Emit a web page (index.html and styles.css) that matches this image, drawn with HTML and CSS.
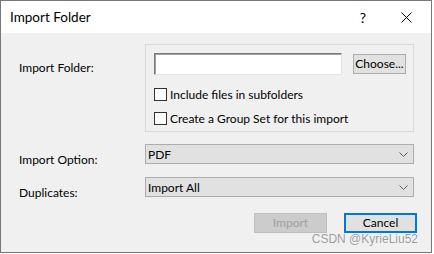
FILE: index.html
```html
<!DOCTYPE html>
<html lang="en">
<head>
  <meta charset="UTF-8" />
  <title>Import Folder</title>
  <link rel="stylesheet" href="styles.css">
</head>
<body>
  <div class="dialog">
    <div class="titlebar">
      <span class="title">Import Folder</span>
      <span class="help">?</span>
      <svg class="close" width="11" height="11" viewBox="0 0 11 11">
        <path d="M0.5 0.5 L10.5 10.5 M10.5 0.5 L0.5 10.5" stroke="#000" stroke-width="1" fill="none"/>
      </svg>
    </div>

    <div class="content">
      <div class="row">
        <label class="field-label folder-label">Import Folder:</label>
        <div class="group">
          <div class="path-line">
            <input class="path" type="text">
            <button class="btn choose">Choose...</button>
          </div>
          <label class="check"><input type="checkbox"><span>Include files in subfolders</span></label>
          <label class="check"><input type="checkbox"><span>Create a Group Set for this import</span></label>
        </div>
      </div>

      <div class="row combo-row">
        <label class="field-label">Import Option:</label>
        <div class="combo">
          <span>PDF</span>
          <svg class="chevron" width="9" height="5" viewBox="0 0 9 5"><path d="M0.5 0.5 L4.5 4.5 L8.5 0.5" stroke="#606060" fill="none"/></svg>
        </div>
      </div>

      <div class="row combo-row">
        <label class="field-label">Duplicates:</label>
        <div class="combo">
          <span>Import All</span>
          <svg class="chevron" width="9" height="5" viewBox="0 0 9 5"><path d="M0.5 0.5 L4.5 4.5 L8.5 0.5" stroke="#606060" fill="none"/></svg>
        </div>
      </div>

      <div class="actions">
        <button class="btn action" disabled>Import</button>
        <button class="btn action default">Cancel</button>
      </div>
    </div>

    <div class="watermark">CSDN @KyrieLiu52</div>
  </div>
</body>
</html>
```

FILE: styles.css
```css
body {
  margin: 0;
  background: #fff;
  font-family: Lato, "Liberation Sans", sans-serif;
  font-size: 12px;
  color: #000;
}
.dialog {
  position: relative;
  width: 432px;
  height: 253px;
  box-sizing: border-box;
  border: 1px solid #777;
  background: #f0f0f0;
}
.titlebar {
  display: flex;
  align-items: center;
  height: 32px;
  padding-left: 9px;
  background: #fff;
}
.title {
  font-size: 13.5px;
}
.help {
  margin-left: auto;
  font-size: 14px;
}
.close {
  margin: 0 19px 0 35px;
}
.content {
  padding: 11px 17px 0 18px;
}
.row {
  display: grid;
  grid-template-columns: 126px 269px;
  align-items: start;
}
.field-label {
  line-height: 16px;
  padding-top: 8px;
  margin-bottom: -4px;
}
.folder-label {
  padding-top: 16px;
}
.group {
  border: 1px solid #dcdcdc;
  padding: 8px 7px 6px 8px;
}
.path-line {
  display: flex;
  align-items: center;
  height: 22px;
  margin-bottom: 13px;
}
.path {
  width: 188px;
  height: 22px;
  box-sizing: border-box;
  margin: 0;
  border: 1px solid;
  border-color: #7a7a7a #e3e3e3 #e3e3e3 #7a7a7a;
  box-shadow: inset 1px 1px 0 #a0a0a0;
  background: #fff;
  outline: none;
}
.btn {
  font-family: inherit;
  font-size: 12px;
  line-height: 14px;
  color: #000;
  background: #e1e1e1;
  border: 1px solid #adadad;
  padding: 0;
  margin: 0;
  box-sizing: border-box;
}
.choose {
  width: 53px;
  height: 20px;
  margin-left: 11px;
}
.check {
  display: flex;
  align-items: center;
  gap: 3px;
  height: 13px;
  line-height: 13px;
}
.check + .check {
  margin-top: 11px;
}
.check input {
  appearance: none;
  width: 13px;
  height: 13px;
  margin: 0;
  border: 1px solid #333;
  background: #fff;
}
.combo-row {
  margin-top: 12px;
}
.combo-row + .combo-row {
  margin-top: 13px;
}
.combo {
  display: flex;
  align-items: center;
  justify-content: space-between;
  height: 20px;
  line-height: 14px;
  box-sizing: border-box;
  padding: 2px 5px 0 2px;
  background: #e1e1e1;
  border: 1px solid #adadad;
}
.chevron {
  margin-top: -2px;
}
.actions {
  display: flex;
  justify-content: flex-end;
  gap: 17px;
  margin: 16px -3px 0 0;
}
.action {
  width: 73px;
  height: 20px;
}
.action:disabled {
  background: #cccccc;
  border-color: #bfbfbf;
  color: #a0a0a0;
}
.default {
  border: 2px solid #0078d7;
}
.watermark {
  position: absolute;
  right: 13px;
  bottom: 6px;
  font-family: "Liberation Sans", sans-serif;
  font-size: 12px;
  line-height: 14px;
  color: #9a9a9a;
  text-shadow: 0 0 1px #fff, 0 0 1px #fff;
}
```
